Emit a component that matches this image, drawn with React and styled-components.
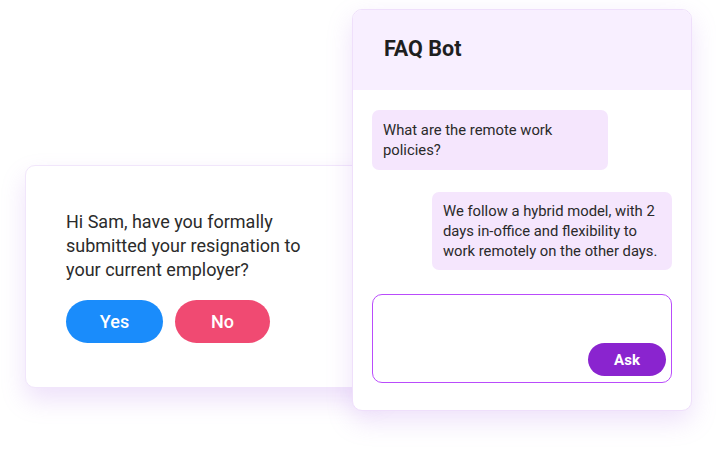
import React from "react";
import styled, { createGlobalStyle } from "styled-components";

const GlobalStyle = createGlobalStyle`
  html, body {
    margin: 0;
    padding: 0;
    background: #ffffff;
    font-family: Roboto, "Liberation Sans", sans-serif;
  }
`;

const Stage = styled.div`
  width: 716px;
  height: 451px;
  display: flex;
  align-items: flex-start;
  padding-left: 25px;
  box-sizing: border-box;
  overflow: hidden;
`;

const PromptCard = styled.div`
  width: 356px;
  height: 223px;
  margin-top: 165px;
  margin-right: -29px;
  box-sizing: border-box;
  padding: 44px 40px 0 40px;
  background: #ffffff;
  border: 1px solid #f1e6fb;
  border-radius: 10px;
  box-shadow: 0 12px 24px rgba(176, 120, 230, 0.22);
  display: flex;
  flex-direction: column;
`;

const Question = styled.p`
  margin: 0;
  width: 250px;
  font-size: 18px;
  line-height: 24px;
  color: #2b2b2b;
`;

const ButtonRow = styled.div`
  display: flex;
  gap: 12px;
  margin-top: 18px;
`;

const Choice = styled.button`
  width: ${(p) => p.$w}px;
  height: 43px;
  border: none;
  border-radius: 22px;
  background: ${(p) => p.$bg};
  color: #ffffff;
  font-family: Roboto, "Liberation Sans", sans-serif;
  font-size: 18px;
  font-weight: 500;
  cursor: pointer;
`;

const BotCard = styled.div`
  position: relative;
  z-index: 1;
  width: 340px;
  height: 402px;
  margin-top: 9px;
  box-sizing: border-box;
  background: #ffffff;
  border: 1px solid #efdffb;
  border-radius: 10px;
  box-shadow: 0 10px 26px rgba(176, 120, 230, 0.22);
  overflow: hidden;
  display: flex;
  flex-direction: column;
`;

const Header = styled.div`
  height: 80px;
  flex-shrink: 0;
  background: #f8efff;
  display: flex;
  align-items: flex-start;
  padding: 25px 31px 0;
  box-sizing: border-box;
`;

const Title = styled.h2`
  margin: 0;
  font-size: 21.5px;
  font-weight: 700;
  color: #1f1f1f;
  line-height: 28px;
`;

const Body = styled.div`
  display: flex;
  flex-direction: column;
  padding: 20px 19px 0 19px;
`;

const Bubble = styled.div`
  align-self: ${(p) => (p.$right ? "flex-end" : "flex-start")};
  width: ${(p) => p.$w}px;
  box-sizing: border-box;
  margin-top: ${(p) => p.$mt || 0}px;
  padding: ${(p) => (p.$right ? "9px 11px" : "10px 11px")};
  background: #f5e6fd;
  border-radius: 7px;
  font-size: 14.8px;
  line-height: 20px;
  color: #2a2a2a;
`;

const InputBox = styled.div`
  margin-top: 24px;
  height: 89px;
  box-sizing: border-box;
  border: 1.5px solid #b94cfb;
  border-radius: 10px;
  display: flex;
  align-items: flex-end;
  justify-content: flex-end;
  padding: 0 5px 6px 0;
`;

const AskButton = styled.button`
  width: 78px;
  height: 33px;
  border: none;
  border-radius: 17px;
  background: #8a24cf;
  color: #ffffff;
  font-family: Roboto, "Liberation Sans", sans-serif;
  font-size: 15px;
  font-weight: 700;
  cursor: pointer;
`;

export default function App() {
  return (
    <>
      <GlobalStyle />
      <Stage>
        <PromptCard>
          <Question>
            Hi Sam, have you formally submitted your resignation to your current employer?
          </Question>
          <ButtonRow>
            <Choice $w={97} $bg="#1a8cfb">Yes</Choice>
            <Choice $w={95} $bg="#f04a72">No</Choice>
          </ButtonRow>
        </PromptCard>
        <BotCard>
          <Header>
            <Title>FAQ Bot</Title>
          </Header>
          <Body>
            <Bubble $w={236}>What are the remote work policies?</Bubble>
            <Bubble $right $w={240} $mt={22}>
              We follow a hybrid model, with 2 days in-office and flexibility to work remotely on the other days.
            </Bubble>
            <InputBox>
              <AskButton>Ask</AskButton>
            </InputBox>
          </Body>
        </BotCard>
      </Stage>
    </>
  );
}
